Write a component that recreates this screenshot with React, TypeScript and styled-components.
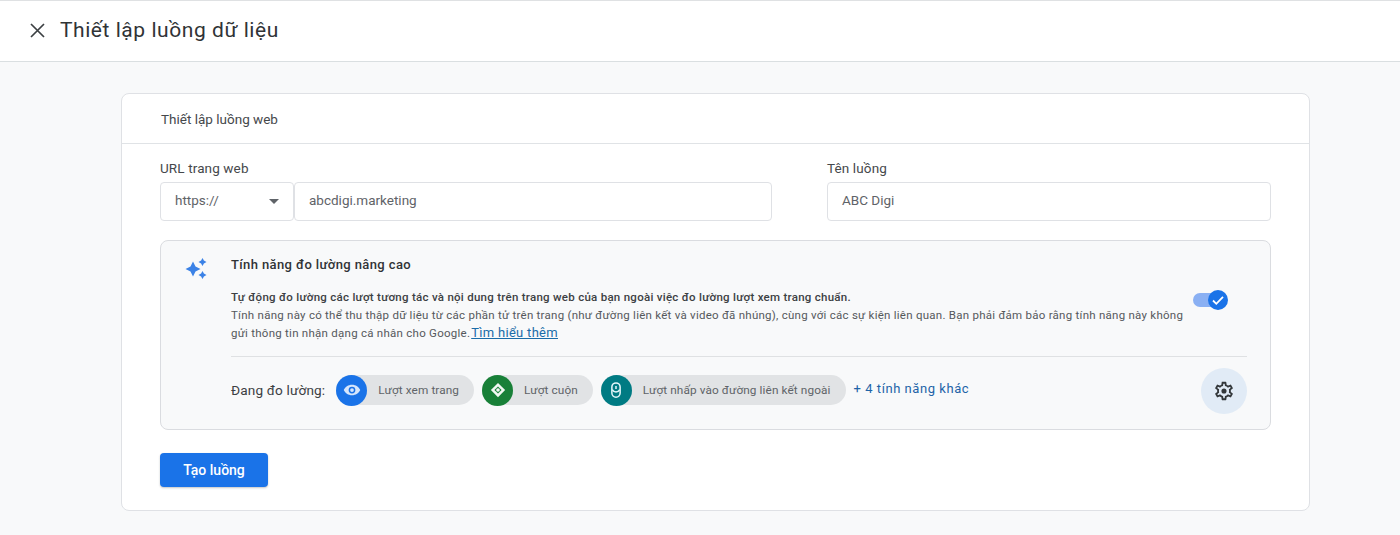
import React from "react";
import styled, { createGlobalStyle } from "styled-components";

const Global = createGlobalStyle`
  html, body { margin: 0; padding: 0; }
  body { background: #f8f9fa; font-family: Roboto, "Noto Sans", sans-serif; color: #3c4043; }
  * { box-sizing: border-box; }
`;
const Page = styled.div`
  width: 1400px; height: 535px; overflow: hidden; background: #f8f9fa;
`;
const Header = styled.header`
  height: 62px; background: #fff; border-top: 1px solid #dfe1e3; border-bottom: 1px solid #dadfe1;
  display: flex; align-items: center; padding: 0 0 2px 29px; gap: 14px;
`;
const CloseIcon = styled.svg`
  width: 17px; height: 17px; display: block; color: #3c4043;
`;
const Title = styled.h1`
  margin: 0; font-size: 21px; font-weight: 400; color: #303336; letter-spacing: 0.55px; line-height: 28px;
`;
const Card = styled.section`
  margin: 31px 0 0 121px; width: 1189px; height: 418px; background: #fff;
  border: 1px solid #dfe1e5; border-radius: 8px;
`;
const CardHeader = styled.div`
  height: 50px; border-bottom: 1px solid #e0e3e6; padding-left: 39px;
  display: flex; align-items: center; font-size: 13.5px; color: #45484b;
`;
const CardBody = styled.div`
  padding: 15px 38px 0 38px;
`;
const Fields = styled.div`
  display: flex; gap: 55px;
`;
const Field = styled.div<{ $w: number }>`
  width: ${(p) => p.$w}px;
`;
const Label = styled.div`
  font-size: 13.5px; line-height: 18px; color: #45484b; margin-bottom: 5px; letter-spacing: 0.12px;
`;
const InputRow = styled.div`
  display: flex;
`;
const Box = styled.div<{ $grow?: boolean }>`
  height: 39px; border: 1px solid #dfe1e5; border-radius: 4px; background: #fff;
  display: flex; align-items: center; padding: 0 14px 3px 14px; font-size: 13.5px; color: #5f6368;
  flex: ${(p) => (p.$grow ? "1" : "none")};
`;
const SelectBox = styled(Box)`
  width: 134px; justify-content: space-between; padding-right: 14px;
`;
const Caret = styled.span`
  width: 0; height: 0; border-left: 5px solid transparent; border-right: 5px solid transparent;
  border-top: 5px solid #5f6368; margin-top: 3px;
`;
const Panel = styled.div`
  margin-top: 19px; height: 190px; background: #f8f9fa; border: 1px solid #dadce0; border-radius: 8px;
  display: flex; padding: 15px 23px 0 23px;
`;
const Sparkle = styled.svg`
  width: 24px; height: 24px; flex: none; margin-right: 23px;
`;
const PanelMain = styled.div`
  flex: 1; min-width: 0;
`;
const PanelTitle = styled.div`
  font-size: 13px; font-weight: 500; line-height: 18px; color: #303336; letter-spacing: 0.39px;
`;
const DescRow = styled.div`
  display: flex; justify-content: space-between; margin-top: 15px;
`;
const Desc = styled.div`
  width: 960px; font-size: 11.5px; color: #55585c; letter-spacing: 0.255px;
`;
const Strong = styled.div`
  font-weight: 500; color: #3c4043; line-height: 17px; letter-spacing: 0.27px;
`;
const DescLine = styled.div`
  line-height: 18px; white-space: nowrap;
`;
const DocLink = styled.a`
  color: #1a6ca8; font-size: 13px; letter-spacing: 0.3px; text-decoration: underline; margin-left: 1px;
`;
const Toggle = styled.div`
  position: relative; width: 34px; height: 14px; border-radius: 7px; background: #8ab0f3;
  margin: 4px 20px 0 0;
`;
const Knob = styled.span`
  position: absolute; right: -1px; top: -3px; width: 20px; height: 20px; border-radius: 50%;
  background: #1a73e8; display: flex; align-items: center; justify-content: center;
`;
const Divider = styled.div`
  height: 1px; background: #dfe1e3; margin-top: 14px;
`;
const MeasureRow = styled.div`
  display: flex; align-items: center; height: 66px;
`;
const MeasureLabel = styled.div`
  font-size: 13.6px; color: #3c4043; letter-spacing: 0.15px; margin-right: 11px;
`;
const Chip = styled.div`
  display: flex; align-items: center; height: 30px; background: #e1e3e5; border-radius: 15px;
  font-size: 11.8px; color: #5f6368; padding-right: 15px; margin-right: 8px; letter-spacing: 0.1px;
`;
const ChipIcon = styled.span<{ $c: string }>`
  width: 31px; height: 31px; border-radius: 50%; background: ${(p) => p.$c};
  display: flex; align-items: center; justify-content: center; margin-right: 11px; flex: none;
`;
const More = styled.a`
  color: #1e64a8; font-size: 13px; font-weight: 400; letter-spacing: 0.55px; margin-top: -4px;
`;
const Gear = styled.div`
  width: 46px; height: 46px; border-radius: 50%; background: #e1ebf6; margin: 2px 0 0 auto;
  display: flex; align-items: center; justify-content: center;
`;
const Button = styled.button`
  display: block; margin-top: 23px; width: 108px; height: 34px; border: 0; border-radius: 4px;
  background: #1a73e8; color: #fff; font: 500 14px Roboto, sans-serif;
  box-shadow: 0 1px 2px rgba(60,64,67,.3);
`;

export default function App() {
  return (
    <Page>
      <Global />
      <Header>
        <CloseIcon viewBox="0 0 17 17" fill="none" stroke="currentColor" strokeWidth="1.7">
          <path d="M2 2l13 13M15 2L2 15" />
        </CloseIcon>
        <Title>Thiết lập luồng dữ liệu</Title>
      </Header>
      <Card>
        <CardHeader>Thiết lập luồng web</CardHeader>
        <CardBody>
          <Fields>
            <Field $w={612}>
              <Label>URL trang web</Label>
              <InputRow>
                <SelectBox>
                  https://
                  <Caret />
                </SelectBox>
                <Box $grow>abcdigi.marketing</Box>
              </InputRow>
            </Field>
            <Field $w={444}>
              <Label>Tên luồng</Label>
              <Box>ABC Digi</Box>
            </Field>
          </Fields>
          <Panel>
            <Sparkle viewBox="0 0 24 24" fill="#3b82e6">
              <path d="M9 5.500l2.500 5 5 2.500-5 2.500-2.500 5-2.500-5-5-2.500 5-2.500z" />
              <path d="M18.500 2l1.400 2.600 2.600 1.400-2.600 1.400-1.400 2.600-1.400-2.600L14.500 6l2.600-1.400z" />
              <path d="M18.500 15l1.400 2.600 2.600 1.400-2.600 1.400-1.400 2.600-1.400-2.600-2.600-1.400 2.600-1.400z" />
            </Sparkle>
            <PanelMain>
              <PanelTitle>Tính năng đo lường nâng cao</PanelTitle>
              <DescRow>
                <Desc>
                  <Strong>
                    Tự động đo lường các lượt tương tác và nội dung trên trang web của bạn ngoài việc đo lường lượt xem trang chuẩn.
                  </Strong>
                  <DescLine>
                    Tính năng này có thể thu thập dữ liệu từ các phần tử trên trang (như đường liên kết và video đã nhúng), cùng với các sự kiện liên quan. Bạn phải đảm bảo rằng tính năng này không
                  </DescLine>
                  <DescLine>
                    gửi thông tin nhận dạng cá nhân cho Google.
                    <DocLink>Tìm hiểu thêm</DocLink>
                  </DescLine>
                </Desc>
                <Toggle>
                  <Knob>
                    <svg width="14" height="14" viewBox="0 0 14 14" fill="none" stroke="#fff" strokeWidth="1.800">
                      <path d="M2 7.500l3.300 3.300L12 3.800" />
                    </svg>
                  </Knob>
                </Toggle>
              </DescRow>
              <Divider />
              <MeasureRow>
                <MeasureLabel>Đang đo lường:</MeasureLabel>
                <Chip>
                  <ChipIcon $c="#1a73e8">
                    <svg width="18" height="18" viewBox="0 0 24 24" fill="#d6e6fc">
                      <path fillRule="evenodd" d="M12 5C7 5 2.700 8 1 12c1.700 4 6 7 11 7s9.300-3 11-7c-1.700-4-6-7-11-7zm0 11.500a4.500 4.500 0 110-9 4.500 4.500 0 010 9z" />
                      <circle cx="12" cy="12" r="2.500" />
                    </svg>
                  </ChipIcon>
                  Lượt xem trang
                </Chip>
                <Chip>
                  <ChipIcon $c="#188038">
                    <svg width="18" height="18" viewBox="0 0 24 24" fill="#f1f8f3">
                      <path fillRule="evenodd" d="M12 2.500L21.500 12 12 21.500 2.500 12zM12 7.200L7.200 12l4.800 4.800 4.800-4.800z" />
                      <circle cx="12" cy="12" r="2.400" />
                    </svg>
                  </ChipIcon>
                  Lượt cuộn
                </Chip>
                <Chip>
                  <ChipIcon $c="#007b83">
                    <svg width="18" height="18" viewBox="0 0 24 24" fill="none" stroke="#e4f7fb" strokeWidth="2">
                      <rect x="6.500" y="2.500" width="11" height="19" rx="5.500" />
                      <path d="M12 6.500v4M7 11.500c1 1.800 3 3 5 3s4-1.200 5-3" />
                    </svg>
                  </ChipIcon>
                  Lượt nhấp vào đường liên kết ngoài
                </Chip>
                <More>+ 4 tính năng khác</More>
                <Gear>
                  <svg width="22" height="22" viewBox="0 0 24 24" fill="#33373a">
                    <path d="M19.430 12.980c.04-.32.070-.640.070-.980s-.030-.660-.070-.980l2.110-1.650c.190-.150.240-.420.120-.640l-2-3.460c-.120-.220-.390-.300-.610-.220l-2.490 1c-.520-.400-1.080-.730-1.690-.980l-.380-2.650A.488.488 0 0014 2h-4c-.250 0-.460.180-.490.420l-.380 2.650c-.610.250-1.170.590-1.690.980l-2.490-1a.566.566 0 00-.180-.030c-.170 0-.340.090-.430.250l-2 3.460c-.130.220-.070.490.120.640l2.110 1.650c-.040.320-.070.650-.070.980s.030.660.070.980l-2.110 1.650c-.190.150-.240.420-.120.640l2 3.460c.120.220.390.300.610.220l2.490-1c.520.400 1.080.730 1.690.980l.380 2.650c.030.240.240.420.490.420h4c.250 0 .460-.180.490-.420l.380-2.650c.610-.250 1.170-.590 1.690-.980l2.490 1c.060.020.120.030.180.030.170 0 .340-.090.430-.250l2-3.460c.120-.220.070-.490-.120-.640l-2.110-1.650zm-1.980-1.710c.040.310.050.520.050.730s-.020.430-.050.730l-.140 1.130.890.700 1.080.840-.700 1.210-1.270-.510-1.040-.420-.900.680c-.430.320-.840.560-1.250.730l-1.060.430-.160 1.130-.200 1.350h-1.400l-.190-1.350-.160-1.130-1.060-.430c-.430-.180-.830-.410-1.230-.710l-.910-.700-1.060.430-1.270.510-.700-1.210 1.080-.840.890-.700-.140-1.130c-.030-.310-.050-.540-.050-.740s.020-.430.050-.730l.140-1.130-.890-.700-1.080-.840.700-1.210 1.270.510 1.040.42.900-.680c.430-.320.840-.560 1.250-.730l1.060-.430.160-1.130.200-1.350h1.390l.190 1.350.160 1.130 1.060.43c.430.180.830.410 1.230.710l.910.700 1.060-.43 1.270-.510.700 1.210-1.070.85-.89.700.140 1.130z" />
                    <circle cx="12" cy="12" r="2.800" />
                  </svg>
                </Gear>
              </MeasureRow>
            </PanelMain>
          </Panel>
          <Button>Tạo luồng</Button>
        </CardBody>
      </Card>
    </Page>
  );
}
